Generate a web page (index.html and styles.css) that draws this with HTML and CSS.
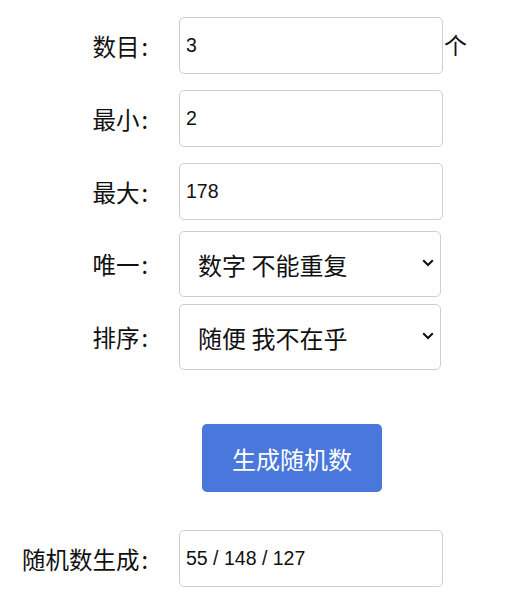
FILE: index.html
```html
<!DOCTYPE html>
<html lang="zh">
<head>
<meta charset="utf-8">
<title>随机数生成</title>
<link rel="stylesheet" href="styles.css">
</head>
<body>
<div class="form">
  <div class="row row-count">
    <label class="label">数目<span class="colon">:</span></label>
    <input class="field" type="text" value="3">
    <span class="unit">个</span>
  </div>
  <div class="row row-min">
    <label class="label">最小<span class="colon">:</span></label>
    <input class="field" type="text" value="2">
  </div>
  <div class="row row-max">
    <label class="label">最大<span class="colon">:</span></label>
    <input class="field" type="text" value="178">
  </div>
  <div class="row row-unique">
    <label class="label">唯一<span class="colon">:</span></label>
    <div class="select-wrap">
      <select class="select"><option>数字 不能重复</option></select>
      <svg class="chevron" width="12" height="8" viewBox="0 0 12 8"><path d="M1.2 1.2 L6 6 L10.8 1.2" fill="none" stroke="#111" stroke-width="2"/></svg>
    </div>
  </div>
  <div class="row row-sort">
    <label class="label">排序<span class="colon">:</span></label>
    <div class="select-wrap">
      <select class="select"><option>随便 我不在乎</option></select>
      <svg class="chevron" width="12" height="8" viewBox="0 0 12 8"><path d="M1.2 1.2 L6 6 L10.8 1.2" fill="none" stroke="#111" stroke-width="2"/></svg>
    </div>
  </div>
  <div class="button-row">
    <button class="btn" type="button">生成随机数</button>
  </div>
  <div class="row row-result">
    <label class="label">随机数生成<span class="colon">:</span></label>
    <input class="field" type="text" value="55 / 148 / 127">
  </div>
</div>
</body>
</html>
```
FILE: styles.css
```css
html, body {
  margin: 0;
  padding: 0;
  background: #fff;
}
body {
  font-family: "Noto Sans CJK SC", "Liberation Sans", sans-serif;
  color: #111;
}
.form {
  display: flex;
  flex-direction: column;
  padding-top: 17px;
}
.row {
  display: flex;
  align-items: center;
}
.label {
  width: 148px;
  text-align: right;
  font-size: 23.5px;
  margin-right: 31px;
  color: #111;
  white-space: nowrap;
}
.colon {
  margin-left: 2px;
}
.field {
  box-sizing: border-box;
  width: 264px;
  height: 57px;
  border: 1px solid #cfcfcf;
  border-radius: 5px;
  padding: 0 6px;
  font-family: "Liberation Sans", Arial, sans-serif;
  font-size: 19.5px;
  color: #111;
  outline: none;
  margin: 0;
}
.unit {
  font-size: 23px;
  margin-left: 1px;
  margin-top: -4px;
}
.row-min, .row-max { margin-top: 16px; }
.row-unique { margin-top: 11px; }
.row-sort { margin-top: 7px; }
.select-wrap {
  position: relative;
  width: 262px;
  height: 66px;
}
.select {
  appearance: none;
  -webkit-appearance: none;
  box-sizing: border-box;
  width: 100%;
  height: 100%;
  border: 1px solid #cfcfcf;
  border-radius: 5px;
  background: #fff;
  padding: 0 30px 0 18px;
  font-family: "Noto Sans CJK SC", sans-serif;
  font-size: 24px;
  color: #111;
  margin: 0;
  outline: none;
}
.chevron {
  position: absolute;
  right: 7px;
  top: 28px;
  pointer-events: none;
}
.button-row {
  display: flex;
  padding-left: 202px;
  margin-top: 54px;
}
.btn {
  width: 180px;
  height: 68px;
  border: none;
  border-radius: 5px;
  background: #4a77dc;
  color: #fff;
  font-family: "Noto Sans CJK SC", sans-serif;
  font-size: 24px;
  padding: 0;
}
.row-result { margin-top: 38px; }
```
